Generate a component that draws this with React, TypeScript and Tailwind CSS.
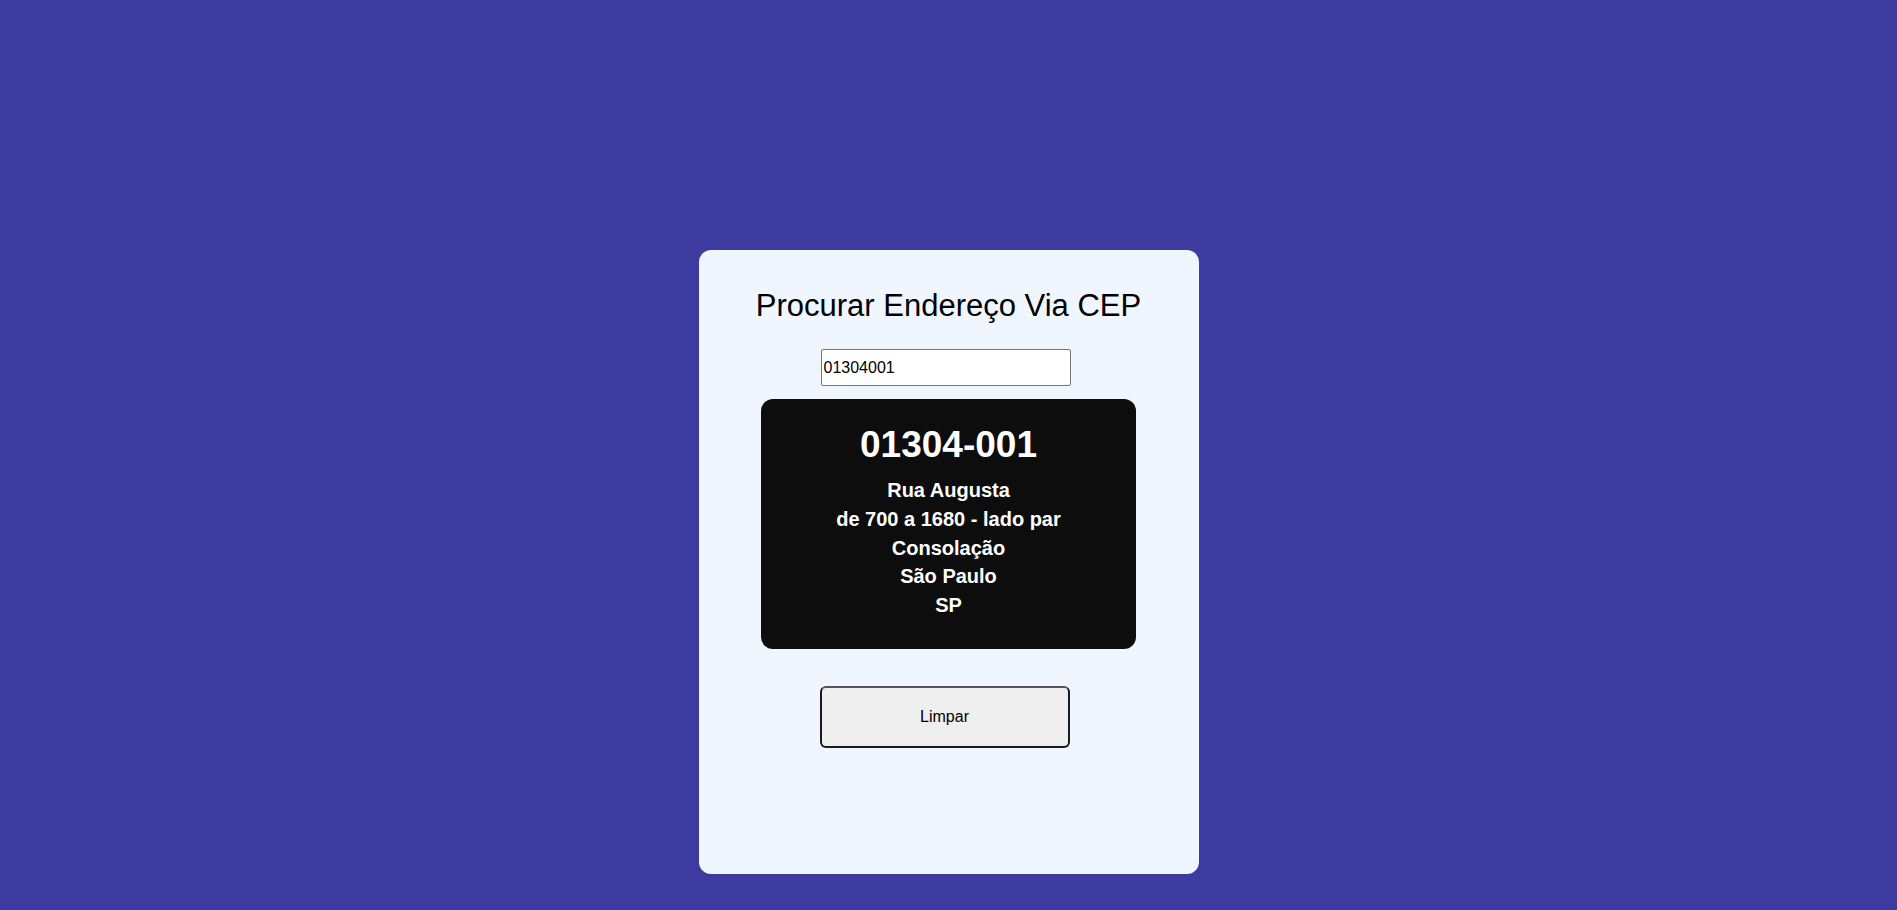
import { useState } from "react";

const endereco = {
  cep: "01304-001",
  linhas: ["Rua Augusta", "de 700 a 1680 - lado par", "Consolação", "São Paulo", "SP"],
};

export default function App() {
  const [cep, setCep] = useState("01304001");

  return (
    <div className="min-h-[910px] w-full bg-[#3d3b9f] pt-[250px] font-['Liberation_Sans',Arial,sans-serif]">
      <div className="mx-auto flex h-[624px] w-[500px] flex-col items-center rounded-[12px] bg-[#eff6ff] pt-[37px]">
        <h1 className="text-[31px] leading-[37px] font-normal text-black">
          Procurar Endereço Via CEP
        </h1>

        <input
          value={cep}
          onChange={(e) => setCep(e.target.value)}
          className="mt-[25px] mr-[6px] h-[37px] w-[250px] rounded-[2px] border border-[#767676] bg-white px-[2px] text-[16px] text-black outline-none"
        />

        {/* Resultado */}
        <div className="mt-[13px] flex h-[250px] w-[375px] flex-col items-center rounded-[12px] bg-[#0d0d0d] pt-[25px] text-white">
          <h2 className="text-[37px] leading-[41px] font-bold">{endereco.cep}</h2>
          <div className="mt-[11px] flex flex-col items-center">
            {endereco.linhas.map((linha) => (
              <p key={linha} className="text-[20px] leading-[28.8px] font-bold">
                {linha}
              </p>
            ))}
          </div>
        </div>

        <button
          type="button"
          onClick={() => setCep("")}
          className="mt-[37px] mr-[8px] h-[62px] w-[250px] rounded-[6px] border-2 border-[#1a1a1a] border-t-[#555] bg-[#efefef] text-[16px] text-black"
        >
          Limpar
        </button>
      </div>
    </div>
  );
}
